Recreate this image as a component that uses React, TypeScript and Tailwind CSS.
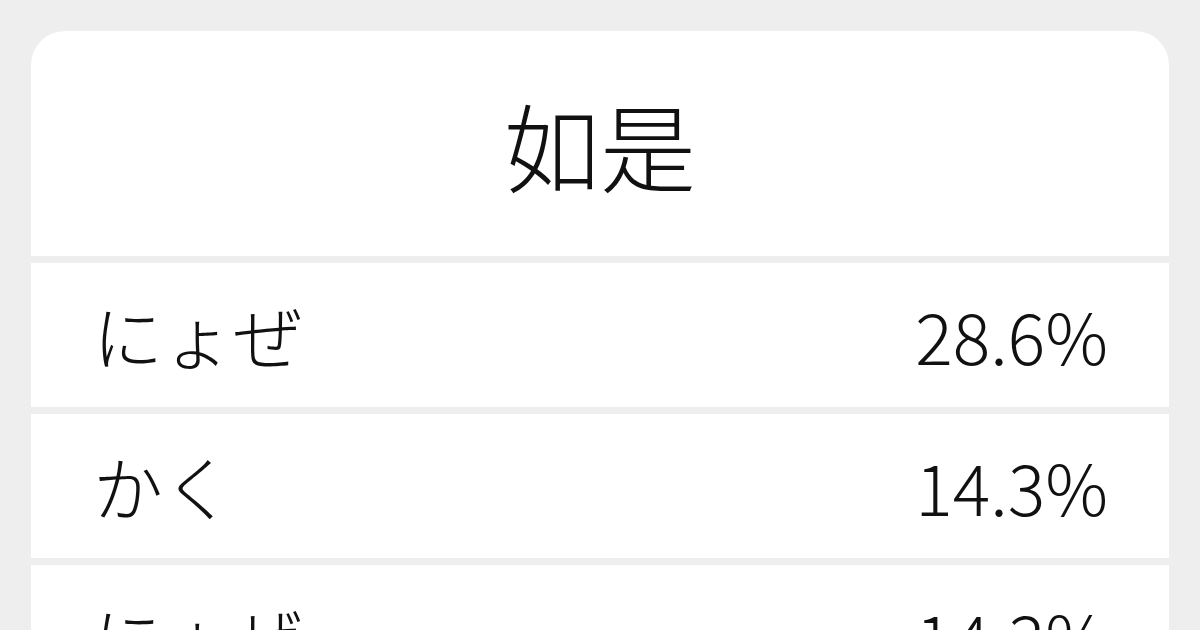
import React from "react";

const rows = [
  { reading: "にょぜ", pct: "28.6%" },
  { reading: "かく", pct: "14.3%" },
  { reading: "にょぜ", pct: "14.3%" },
];

export default function App() {
  return (
    <div
      className="w-[1200px] h-[630px] overflow-hidden bg-[#eeeeee] px-[31px] pt-[31px]"
      style={{ fontFamily: '"Noto Sans CJK JP", "Noto Sans", sans-serif' }}
    >
      <div className="flex flex-col gap-[7px] rounded-t-[34px] overflow-hidden">
        <div className="h-[225px] bg-white flex items-center justify-center">
          <h1 className="text-[96px] font-light leading-none text-[#111111]">如是</h1>
        </div>
        {rows.map((row, i) => (
          <div
            key={i}
            className="h-[144px] shrink-0 bg-white flex items-center justify-between pl-[62px] pr-[61px] text-[70px] font-light leading-none text-[#111111]"
          >
            <span>{row.reading}</span>
            <span>{row.pct}</span>
          </div>
        ))}
      </div>
    </div>
  );
}
